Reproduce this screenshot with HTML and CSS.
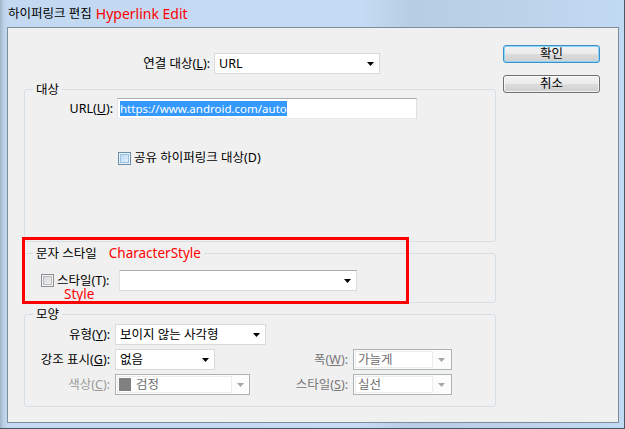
FILE: index.html
```
<!DOCTYPE html>
<html lang="ko">
<head>
<meta charset="utf-8">
<title>하이퍼링크 편집</title>
<link rel="stylesheet" href="styles.css">
</head>
<body>
<div class="window">
  <div class="titlebar">
    <span class="title-ko">하이퍼링크 편집</span>
    <span class="title-en">Hyperlink Edit</span>
  </div>
  <div class="client">
    <div class="main">
      <div class="link-row">
        <span class="lbl">연결 대상(<u>L</u>):</span>
        <div class="sel w166">
          <span class="val">URL</span>
          <svg class="arrow" width="7" height="4" viewBox="0 0 7 4"><path d="M0 0h7L3.5 4z"/></svg>
        </div>
      </div>

      <fieldset class="group g1">
        <legend>대상</legend>
        <div class="url-row">
          <span class="lbl">URL(<u>U</u>):</span>
          <div class="textbox"><span class="sel-text">https://www.android.com/auto</span></div>
        </div>
        <div class="chk-row">
          <span class="cb hot"></span>
          <span>공유 하이퍼링크 대상(D)</span>
        </div>
      </fieldset>

      <fieldset class="group g2">
        <legend>문자 스타일<span class="note-inline">CharacterStyle</span></legend>
        <div class="cs-row">
          <div class="chklbl">
            <span class="cb"></span>
            <span class="chktext">스타일(T):</span>
          </div>
          <div class="sel edit w238">
            <span class="val"></span>
            <svg class="arrow" width="7" height="4" viewBox="0 0 7 4"><path d="M0 0h7L3.5 4z"/></svg>
          </div>
          <span class="style-note">Style</span>
        </div>
      </fieldset>

      <fieldset class="group g3">
        <legend>모양</legend>
        <div class="shape-grid">
          <span class="lbl">유형(<u>Y</u>):</span>
          <div class="sel w151">
            <span class="val">보이지 않는 사각형</span>
            <svg class="arrow" width="7" height="4" viewBox="0 0 7 4"><path d="M0 0h7L3.5 4z"/></svg>
          </div>
          <span></span>
          <span></span>

          <span class="lbl">강조 표시(<u>G</u>):</span>
          <div class="sel w100">
            <span class="val">없음</span>
            <svg class="arrow" width="7" height="4" viewBox="0 0 7 4"><path d="M0 0h7L3.5 4z"/></svg>
          </div>
          <span class="lbl dis2">폭(<u>W</u>):</span>
          <div class="dsel w99">
            <span class="field f78">가늘게</span>
            <svg class="arrow" width="7" height="4" viewBox="0 0 7 4"><path d="M0 0h7L3.5 4z"/></svg>
          </div>

          <span class="lbl dis">색상(<u>C</u>):</span>
          <div class="dsel w135">
            <span class="field f115"><span class="swatch"></span>검정</span>
            <svg class="arrow" width="7" height="4" viewBox="0 0 7 4"><path d="M0 0h7L3.5 4z"/></svg>
          </div>
          <span class="lbl dis2">스타일(<u>S</u>):</span>
          <div class="dsel w99">
            <span class="field f78">실선</span>
            <svg class="arrow" width="7" height="4" viewBox="0 0 7 4"><path d="M0 0h7L3.5 4z"/></svg>
          </div>
        </div>
      </fieldset>
    </div>

    <div class="buttons">
      <div class="btn default">확인</div>
      <div class="btn">취소</div>
    </div>

    <div class="annot-box"></div>
  </div>
</div>
</body>
</html>
```
FILE: styles.css
```
* { box-sizing: border-box; }
html, body { margin: 0; padding: 0; }
body {
  width: 625px;
  height: 429px;
  overflow: hidden;
  font-family: "Noto Sans", "Noto Sans CJK KR", sans-serif;
  font-size: 12.5px;
  color: #000;
  background: #bcd5ee;
}
u { text-underline-offset: 1px; }

.window {
  width: 625px;
  height: 429px;
  display: flex;
  flex-direction: column;
  padding: 0 5px 5px 7px;
  border-right: 1px solid #4a5766;
  border-bottom: 1px solid #4a5766;
  background:
    linear-gradient(to right, #9fb2c6 0, #b9cde2 3px, #c2d9f1 7px, #c4dbf3 58%, #b7cde3 66%, #bcd2e9 82%, #c1daf3 100%);
}
.titlebar {
  height: 27px;
  display: flex;
  align-items: center;
  padding-left: 1px;
  gap: 4px;
  line-height: 20px;
}
.title-ko { font-size: 12.5px; }
.title-en { font-size: 14px; color: #f00; }

.client {
  flex: 1;
  position: relative;
  border: 1px solid #7f8c99;
  background: #f0f0f0;
  display: grid;
  grid-template-columns: 472px 97px;
  column-gap: 7px;
  align-items: start;
  padding: 17px 0 0 16px;
}

.main { display: flex; flex-direction: column; }

.lbl { white-space: nowrap; line-height: 21px; }

.link-row {
  margin-top: 8px;
  display: flex;
  align-items: center;
  height: 21px;
}
.link-row .lbl { width: 186px; text-align: right; margin-right: 4px; }

.sel {
  height: 21px;
  background: #fff;
  border: 1px solid #d9d9d9;
  display: flex;
  align-items: center;
  padding-left: 4px;
}
.sel.edit { border-top-color: #abadb3; border-left-color: #e2e3ea; }
.sel .val { flex: 1; white-space: nowrap; line-height: 19px; }
.sel .arrow { margin-right: 5px; fill: #000; flex: none; }
.w166 { width: 166px; }
.w238 { width: 238px; }
.w151 { width: 151px; }
.w100 { width: 100px; }
.w99 { width: 99px; }
.w135 { width: 135px; }

.group {
  margin: 0;
  padding: 0;
  border: 1px solid #d5dfe5;
  border-radius: 3px;
  min-width: 0;
}
.group legend {
  margin-left: 8px;
  padding: 0 3px;
  line-height: 17px;
  font-size: 12.5px;
}
.note-inline {
  margin-left: 12px;
  color: #f00;
  font-size: 13.5px;
  line-height: 15px;
}
.g1 { margin-top: 7px; padding-bottom: 75px; }
.g2 { margin-top: 3px; padding-bottom: 11px; }
.g3 { margin-top: 3px; padding-bottom: 11px; }

.url-row { display: flex; align-items: center; height: 21px; }
.url-row .lbl { width: 88px; text-align: right; margin-right: 4px; }
.textbox {
  width: 300px;
  height: 21px;
  background: #fff;
  border: 1px solid;
  border-color: #abadb3 #dbdfe6 #e3e9ef #e2e3ea;
  padding-left: 2px;
  display: flex;
  align-items: center;
}
.sel-text {
  background: #3399ff;
  color: #fff;
  font-size: 11.5px;
  line-height: 15px;
  white-space: nowrap;
}

.chk-row {
  margin: 31px 0 0 93px;
  display: flex;
  align-items: center;
  gap: 3px;
  height: 16px;
  line-height: 16px;
}
.cb {
  flex: none;
  width: 13px;
  height: 13px;
  border: 1px solid #8e8f8f;
  background: linear-gradient(135deg, #cbcfd5, #f7f7f7);
  box-shadow: inset 0 0 0 1px #f4f4f4, inset 0 0 0 2px #b9bcc0;
}
.cb.hot {
  border-color: #6b8fa8;
  background: linear-gradient(135deg, #aed3f2, #eef7fe);
  box-shadow: inset 0 0 0 1px #e6f3fd, inset 0 0 0 2px #9cc3e2;
}

.cs-row {
  position: relative;
  margin-top: 8px;
  display: flex;
  align-items: center;
  height: 21px;
  padding-left: 16px;
}
.chklbl { width: 78px; display: flex; align-items: center; gap: 3px; white-space: nowrap; }
.chktext { line-height: 13px; }
.style-note {
  position: absolute;
  left: 39px;
  top: 18px;
  color: #f00;
  font-size: 13.5px;
  line-height: 13px;
}

.shape-grid {
  margin-top: 1px;
  display: grid;
  grid-template-columns: 85px 167px 61px 99px;
  column-gap: 5px;
  row-gap: 4px;
  grid-auto-rows: 21px;
  align-items: center;
}
.shape-grid .lbl { text-align: right; }
.lbl.dis { color: #9a9a9a; }
.lbl.dis2 { color: #777; }

.dsel {
  height: 21px;
  border: 1px solid #adb2b5;
  background: #fcfcfc;
  display: flex;
  align-items: stretch;
  padding: 1px;
}
.dsel .field {
  background: #fff;
  border: 1px solid #ececec;
  display: flex;
  align-items: center;
  padding-left: 2px;
  color: #6d6d6d;
  white-space: nowrap;
  line-height: 15px;
}
.f78 { width: 78px; }
.f115 { width: 115px; padding-left: 1px !important; }
.swatch {
  width: 12px;
  height: 13px;
  background: #808080;
  margin-right: 5px;
  flex: none;
}
.dsel .arrow { align-self: center; margin: 0 auto; fill: #a6a6a6; }

.buttons { display: flex; flex-direction: column; gap: 12px; }
.btn {
  height: 18px;
  border: 1px solid #707070;
  border-radius: 3px;
  background: linear-gradient(#f2f2f2 0%, #ebebeb 50%, #dddddd 50%, #cfcfcf 100%);
  box-shadow: inset 0 0 0 1px rgba(255, 255, 255, 0.7);
  text-align: center;
  line-height: 16px;
}
.btn.default {
  border-color: #3c8fc8;
  box-shadow: inset 0 0 0 1px #8ad8f8;
}

.annot-box {
  position: absolute;
  left: 14px;
  top: 209px;
  width: 387px;
  height: 67px;
  border: 3px solid #f00;
  pointer-events: none;
}
```
